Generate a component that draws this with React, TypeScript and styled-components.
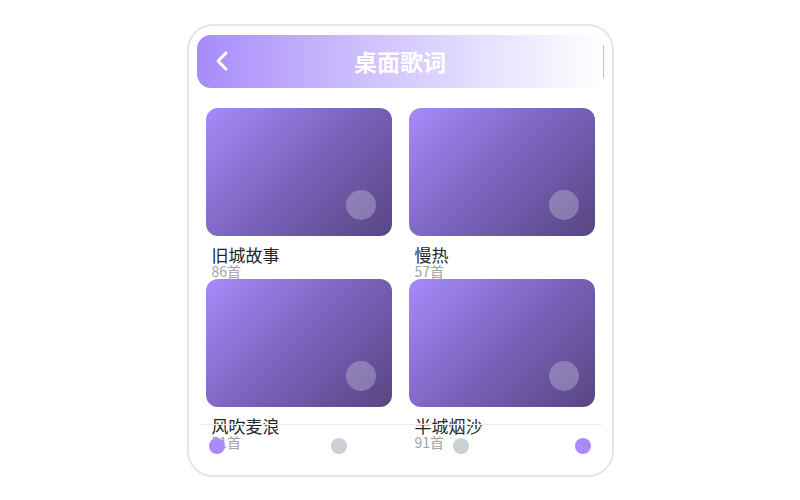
import styled, { createGlobalStyle } from "styled-components";

const GlobalStyle = createGlobalStyle`
  body {
    margin: 0;
    background: #ffffff;
    font-family: "Noto Sans", "Noto Sans CJK SC", sans-serif;
  }
`;

interface Album {
  name: string;
  count: number;
}

const albums: Album[] = [
  { name: "旧城故事", count: 86 },
  { name: "慢热", count: 57 },
  { name: "风吹麦浪", count: 51 },
  { name: "半城烟沙", count: 91 },
];

const tabs = [true, false, false, true];

const Page = styled.div`
  height: 500px;
  display: flex;
  align-items: center;
  justify-content: center;
`;

const Phone = styled.div`
  position: relative;
  box-sizing: border-box;
  width: 427px;
  height: 453px;
  border: 2px solid #e6e6ea;
  border-radius: 26px;
  padding: 9px 8px 0 8px;
  overflow: hidden;
  display: flex;
  flex-direction: column;
`;

const Header = styled.div`
  position: relative;
  flex: none;
  height: 53px;
  border-radius: 14px;
  background: linear-gradient(90deg, #a78bfa 0%, #cdbffd 40%, #ffffff 100%);
  display: grid;
  grid-template-columns: 60px 1fr 60px;
  align-items: center;
`;

const BackButton = styled.button`
  border: none;
  background: none;
  padding: 0 0 0 18px;
  display: flex;
  align-items: center;
  cursor: pointer;
`;

const Title = styled.h1`
  margin: 0;
  text-align: center;
  font-family: "Noto Sans CJK SC", sans-serif;
  font-size: 23px;
  font-weight: 700;
  color: #ffffff;
`;

const Divider = styled.div`
  justify-self: end;
  width: 1px;
  height: 33px;
  background: #c4b5fd;
`;

const Grid = styled.div`
  margin-top: 20px;
  padding: 0 9px;
  display: grid;
  grid-template-columns: 1fr 1fr;
  grid-auto-rows: 171px;
  column-gap: 17px;
`;

const Item = styled.div`
  display: flex;
  flex-direction: column;
`;

const Cover = styled.div`
  position: relative;
  height: 128px;
  border-radius: 12px;
  background: linear-gradient(135deg, #a78bfa 0%, #7a63bd 50%, #574682 100%);
`;

const PlayDot = styled.div`
  position: absolute;
  right: 16px;
  bottom: 16px;
  width: 30px;
  height: 30px;
  border-radius: 50%;
  background: rgba(255, 255, 255, 0.25);
`;

const Name = styled.div`
  margin: 9px 0 0 6px;
  font-family: "Noto Sans CJK SC", sans-serif;
  font-size: 17px;
  line-height: 19px;
  color: #262629;
`;

const Count = styled.div`
  margin-left: 6px;
  font-family: "Noto Sans CJK SC", sans-serif;
  font-size: 14px;
  line-height: 15px;
  color: #a3a3a8;
`;

const TabBar = styled.div`
  position: absolute;
  left: 10px;
  right: 10px;
  bottom: 7px;
  height: 44px;
  box-sizing: border-box;
  padding: 0 10px;
  border-top: 1px solid #ececef;
  display: flex;
  align-items: center;
  justify-content: space-between;
`;

const TabDot = styled.div<{ $active: boolean }>`
  width: 16px;
  height: 16px;
  border-radius: 50%;
  background: ${(p) => (p.$active ? "#a78bfa" : "#cbd0d6")};
`;

export default function App() {
  return (
    <>
      <GlobalStyle />
      <Page>
        <Phone>
          <Header>
            <BackButton aria-label="back">
              <svg width="14" height="22" viewBox="0 0 14 22">
                <polyline
                  points="11,3 3,11 11,19"
                  fill="none"
                  stroke="#ffffff"
                  strokeWidth="3"
                  strokeLinecap="round"
                  strokeLinejoin="round"
                />
              </svg>
            </BackButton>
            <Title>桌面歌词</Title>
            <Divider />
          </Header>
          <Grid>
            {albums.map((a) => (
              <Item key={a.name}>
                <Cover>
                  <PlayDot />
                </Cover>
                <Name>{a.name}</Name>
                <Count>{a.count}首</Count>
              </Item>
            ))}
          </Grid>
          <TabBar>
            {tabs.map((active, i) => (
              <TabDot key={i} $active={active} />
            ))}
          </TabBar>
        </Phone>
      </Page>
    </>
  );
}
